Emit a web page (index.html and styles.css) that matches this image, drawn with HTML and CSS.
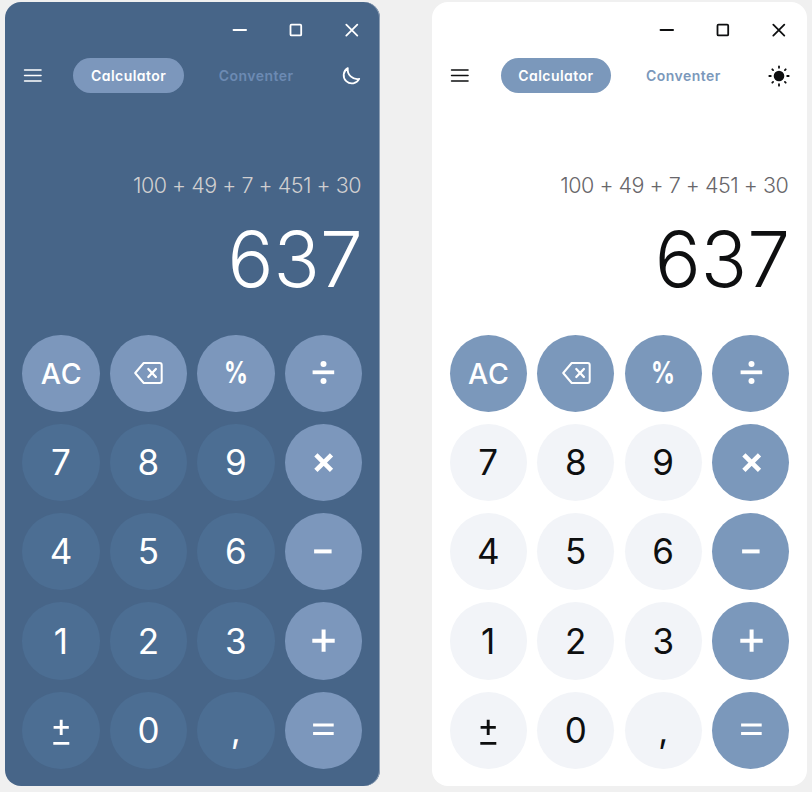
FILE: index.html
```html
<!DOCTYPE html>
<html lang="en">
<head>
<meta charset="utf-8">
<title>Calculator</title>
<link rel="stylesheet" href="styles.css">
</head>
<body>
<svg class="defs" width="0" height="0" aria-hidden="true">
  <symbol id="min" viewBox="0 0 20 20"><path d="M3.5 10h12.6"/></symbol>
  <symbol id="max" viewBox="0 0 20 20"><rect x="4.5" y="4.7" width="10.7" height="10.7" rx="1"/></symbol>
  <symbol id="close" viewBox="0 0 20 20"><path d="M4.3 4.6l11 11M15.3 4.6l-11 11"/></symbol>
  <symbol id="menu" viewBox="0 0 20 20"><path d="M1.6 5h16.4M1.6 10.5h16.4M1.6 16h16.4" stroke-width="1.6"/></symbol>
  <symbol id="moon" viewBox="0 0 20 20"><path d="M6.8 2.1A8.2 8.2 0 1 0 18.2 12.9A9.6 9.6 0 0 1 6.8 2.1Z"/></symbol>
  <symbol id="sun" viewBox="0 0 22 22"><circle cx="11" cy="11" r="5.3" fill="currentColor" stroke="none"/><path d="M11 1.3v1.5M11 19.2v1.5M1.3 11h1.5M19.2 11h1.5M4.3 4.3l.8.8M16.9 16.9l.8.8M4.3 17.7l.8-.8M16.9 5.1l.8-.8"/></symbol>
  <symbol id="back" viewBox="0 0 30 24"><path d="M10.7 2H26.7a2 2 0 0 1 2 2V20a2 2 0 0 1-2 2H10.7L2.2 12Z" stroke-width="2"/><path d="M15.3 8l7.6 8M22.9 8l-7.6 8" stroke-width="2.3"/></symbol>
  <symbol id="div" viewBox="0 0 26 26"><path d="M2.6 12.3h21.6" stroke-width="3.8"/><g fill="currentColor" stroke="none"><circle cx="13.5" cy="3.9" r="3"/><circle cx="13.5" cy="21" r="3"/></g></symbol>
  <symbol id="mul" viewBox="0 0 26 26"><path d="M5.9 5.8l15.6 15.6M21.5 5.8L5.9 21.4" stroke-width="4.6"/></symbol>
  <symbol id="sub" viewBox="0 0 26 26"><path d="M4.1 12.4h17.5" stroke-width="4"/></symbol>
  <symbol id="add" viewBox="0 0 26 26"><path d="M2.3 12.7h22.4M13.6 1.4v22.4" stroke-width="4"/></symbol>
  <symbol id="eq" viewBox="0 0 26 26"><path d="M3.1 8h20.6M3.1 16.6h20.6" stroke-width="3"/></symbol>
  <symbol id="sign" viewBox="0 0 30 30"><path d="M7.6 12.4h15.2M15.2 4.8V20M7.3 28.4h16" stroke-width="2.9"/></symbol>
</svg>
<main class="stage">
  <section class="app dark">
    <div class="window-bar"><svg><use href="#min"/></svg><svg><use href="#max"/></svg><svg><use href="#close"/></svg></div>
    <nav class="nav"><svg class="menu"><use href="#menu"/></svg><div class="tab active">Calculator</div><div class="tab">Conventer</div><svg class="mode"><use href="#moon"/></svg></nav>
    <div class="expression">100 + 49 + 7 + 451 + 30</div>
    <div class="result">637</div>
    <div class="keys">
      <button class="key op ac">AC</button><button class="key op"><svg class="back"><use href="#back"/></svg></button><button class="key op pct"><span>%</span></button><button class="key op"><svg><use href="#div"/></svg></button>
      <button class="key">7</button><button class="key">8</button><button class="key">9</button><button class="key op"><svg><use href="#mul"/></svg></button>
      <button class="key">4</button><button class="key">5</button><button class="key">6</button><button class="key op"><svg><use href="#sub"/></svg></button>
      <button class="key">1</button><button class="key">2</button><button class="key">3</button><button class="key op"><svg><use href="#add"/></svg></button>
      <button class="key"><svg class="sign"><use href="#sign"/></svg></button><button class="key">0</button><button class="key comma">,</button><button class="key op"><svg><use href="#eq"/></svg></button>
    </div>
  </section>
  <section class="app light">
    <div class="window-bar"><svg><use href="#min"/></svg><svg><use href="#max"/></svg><svg><use href="#close"/></svg></div>
    <nav class="nav"><svg class="menu"><use href="#menu"/></svg><div class="tab active">Calculator</div><div class="tab">Conventer</div><svg class="mode sun"><use href="#sun"/></svg></nav>
    <div class="expression">100 + 49 + 7 + 451 + 30</div>
    <div class="result">637</div>
    <div class="keys">
      <button class="key op ac">AC</button><button class="key op"><svg class="back"><use href="#back"/></svg></button><button class="key op pct"><span>%</span></button><button class="key op"><svg><use href="#div"/></svg></button>
      <button class="key">7</button><button class="key">8</button><button class="key">9</button><button class="key op"><svg><use href="#mul"/></svg></button>
      <button class="key">4</button><button class="key">5</button><button class="key">6</button><button class="key op"><svg><use href="#sub"/></svg></button>
      <button class="key">1</button><button class="key">2</button><button class="key">3</button><button class="key op"><svg><use href="#add"/></svg></button>
      <button class="key"><svg class="sign"><use href="#sign"/></svg></button><button class="key">0</button><button class="key comma">,</button><button class="key op"><svg><use href="#eq"/></svg></button>
    </div>
  </section>
</main>
</body>
</html>
```
FILE: styles.css
```css
* { box-sizing: border-box; }
body { margin: 0; background: #f0f0f0; font-family: Inter, sans-serif; font-feature-settings: "cv11"; }
.defs { display: block; }
.stage { display: flex; gap: 52.3px; padding: 2px 0 0 5px; }
.app { width: 375px; height: 784px; border-radius: 16px; padding: 18px 17.3px 0; flex: none; }
.dark { --fg: #fff; --muted: #d0cfd0; --accent: #7c97bc; --tab: #6c8ab3; --key: #4c6e93; background: #476588; box-shadow: inset -1px 0 #8d9fb5; color: var(--fg); }
.light { --fg: #0e0f10; --muted: #68666a; --accent: #7b98bb; --tab: #7b98bb; --key: #f2f4f8; background: #fff; color: var(--fg); }
svg { fill: none; stroke: currentColor; stroke-width: 1.8; stroke-linecap: round; stroke-linejoin: round; overflow: visible; }
.window-bar { display: flex; justify-content: flex-end; gap: 36px; height: 20px; padding-right: .7px; }
.window-bar svg { width: 20px; height: 20px; }
.nav { display: flex; align-items: center; height: 35px; margin-top: 18px; }
.nav svg { width: 20px; height: 20px; }
.nav .menu { margin: -1px 30.4px 0 .7px; }
.nav .mode { margin-left: auto; margin-right: 1.3px; }
.nav .mode.sun { width: 22px; height: 22px; margin-right: .4px; }
.tab { width: 110.5px; height: 35px; line-height: 36px; border-radius: 18px; text-align: center; font-size: 14px; font-weight: 600; letter-spacing: .45px; color: var(--tab); }
.tab + .tab { margin-left: 17px; }
.tab.active { background: var(--accent); color: #fff; }
.expression { margin-top: 76px; height: 32px; line-height: 32px; font-size: 21.5px; font-weight: 300; text-align: right; white-space: nowrap; color: var(--muted); letter-spacing: -.48px; padding-right: 1.7px; }
.result { margin-top: 12px; height: 92px; line-height: 92px; font-size: 76.5px; font-weight: 300; text-align: right; }
.keys { display: grid; grid-template-columns: repeat(4, 77.3px); grid-auto-rows: 77.3px; gap: 12px 10.2px; margin-top: 29.5px; }
.key { border: 0; border-radius: 50%; padding: 0; background: var(--key); color: var(--fg); font: 400 35px/1 Inter, sans-serif; display: flex; align-items: center; justify-content: center; }
.key.op { background: var(--accent); color: #fff; }
.key svg { width: 26px; height: 26px; stroke-linecap: butt; }
.key .back { width: 30px; height: 24px; stroke-linecap: round; }
.key .sign { width: 30px; height: 30px; }
.key.ac { font-size: 28.5px; font-weight: 500; letter-spacing: 1px; padding: 3px 0 0 1.5px; }
.key.pct { font-size: 29.5px; font-weight: 700; }
.pct span { transform: scaleX(.8); }
```
